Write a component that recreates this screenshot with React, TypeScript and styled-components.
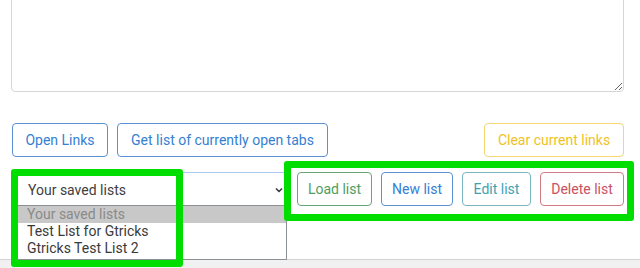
import styled, { createGlobalStyle } from "styled-components";

const GlobalStyle = createGlobalStyle`
  html, body {
    margin: 0;
    padding: 0;
    background: #ffffff;
    font-family: Roboto, "Liberation Sans", sans-serif;
    overflow: hidden;
  }
`;

const tones: Record<string, { text: string; border: string }> = {
  primary: { text: "#3580d3", border: "#5b92cf" },
  success: { text: "#4f9d61", border: "#68a676" },
  info: { text: "#40a2b3", border: "#7ab6c0" },
  danger: { text: "#cb5060", border: "#d27a85" },
  warning: { text: "#f0c125", border: "#f3d678" },
};

const Page = styled.div`
  position: relative;
  height: 259px;
  padding: 0 16px 0 11px;
  display: flex;
  flex-direction: column;
  overflow: visible;
`;

const LinksBox = styled.textarea`
  display: block;
  box-sizing: border-box;
  width: 613px;
  height: 120px;
  margin-top: -28px;
  border: 1px solid #d4d6d9;
  border-radius: 4px;
  resize: vertical;
  background: #fff;
`;

const Row = styled.div<{ top: number }>`
  display: flex;
  align-items: center;
  gap: 9px;
  margin-top: ${(p) => p.top}px;
  padding-left: 1px;
`;

const Spacer = styled.div`
  flex: 1;
`;

const Button = styled.button<{ tone: string; w: number }>`
  box-sizing: border-box;
  height: 34px;
  width: ${(p) => p.w}px;
  padding: 0;
  font-family: Roboto, "Liberation Sans", sans-serif;
  font-size: 14px;
  color: ${(p) => tones[p.tone].text};
  background: #fff;
  border: 1px solid ${(p) => tones[p.tone].border};
  border-radius: 4px;
  cursor: pointer;
`;

const SelectWrap = styled.div`
  position: relative;
  width: 275px;
  height: 34px;
  margin-right: 1px;
`;

const SelectBox = styled.div`
  box-sizing: border-box;
  height: 34px;
  display: flex;
  align-items: center;
  justify-content: space-between;
  padding: 2px 2px 0 15px;
  border: 1px solid #a9c9f2;
  border-bottom-color: #8c9196;
  border-radius: 4px 4px 0 0;
  font-size: 14px;
  color: #404040;
`;

const OptionList = styled.ul`
  position: absolute;
  top: 34px;
  left: 0;
  right: 0;
  margin: 0;
  padding: 0 0 2px;
  list-style: none;
  background: #fff;
  border: 1px solid #8c9196;
  border-top: none;
  z-index: 2;
`;

const Option = styled.li<{ active?: boolean }>`
  height: 17px;
  line-height: 17px;
  padding-left: 14px;
  font-size: 14px;
  color: ${(p) => (p.active ? "#8a8a8a" : "#3a3a3a")};
  background: ${(p) => (p.active ? "#c8c8c8" : "transparent")};
`;

const ButtonGroup = styled.div`
  display: flex;
  gap: 9px;
`;

const Footer = styled.div`
  height: 9px;
  border-top: 1px solid #d3d3d3;
  background: #f1f1f1;
`;

const Highlight = styled.div<{ x: number; y: number; w: number; h: number }>`
  position: absolute;
  left: ${(p) => p.x}px;
  top: ${(p) => p.y}px;
  width: ${(p) => p.w}px;
  height: ${(p) => p.h}px;
  box-sizing: border-box;
  border: 7px solid #00dd00;
  border-radius: 3px;
  z-index: 5;
  pointer-events: none;
`;

const Chevron = () => (
  <svg width="10" height="10" viewBox="0 0 10 10">
    <path d="M2 3.5 L5 6.5 L8 3.5" fill="none" stroke="#333" strokeWidth="1.5" />
  </svg>
);

const savedLists = ["Your saved lists", "Test List for Gtricks", "Gtricks Test List 2"];

const App = () => {
  return (
    <>
      <GlobalStyle />
      <Page>
        <LinksBox />
        <Row top={31}>
          <Button tone="primary" w={96}>Open Links</Button>
          <Button tone="primary" w={211}>Get list of currently open tabs</Button>
          <Spacer />
          <Button tone="warning" w={140}>Clear current links</Button>
        </Row>
        <Row top={15}>
          <SelectWrap>
            <SelectBox>
              <span>Your saved lists</span>
              <Chevron />
            </SelectBox>
            <OptionList>
              {savedLists.map((name, i) => (
                <Option key={name} active={i === 0}>
                  {name}
                </Option>
              ))}
            </OptionList>
          </SelectWrap>
          <ButtonGroup>
            <Button tone="success" w={75}>Load list</Button>
            <Button tone="primary" w={72}>New list</Button>
            <Button tone="info" w={69}>Edit list</Button>
            <Button tone="danger" w={84}>Delete list</Button>
          </ButtonGroup>
        </Row>
        <Highlight x={11} y={169} w={172} h={98} />
        <Highlight x={284} y={161} w={350} h={60} />
      </Page>
      <Footer />
    </>
  );
};

export default App;
